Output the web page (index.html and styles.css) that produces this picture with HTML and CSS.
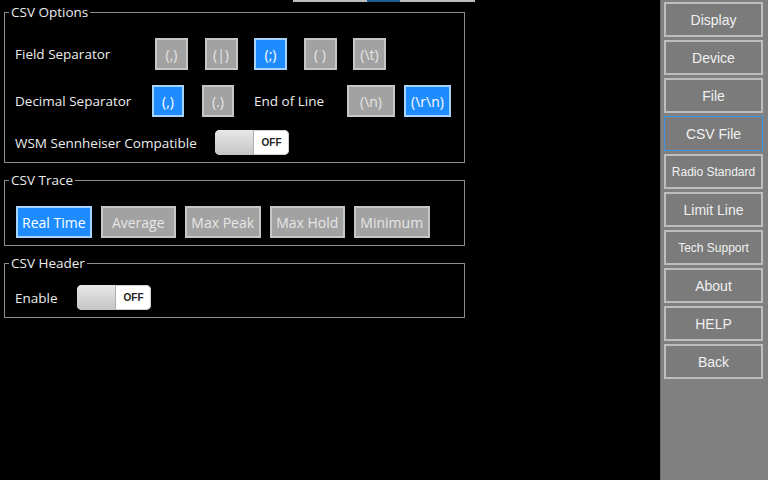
FILE: index.html
```html
<!DOCTYPE html>
<html lang="en">
<head>
    <meta charset="UTF-8">
    <meta name="viewport" content="width=device-width, initial-scale=1.0">
    <title>CSV File Settings</title>
    <link rel="stylesheet" href="styles.css">
</head>
<body>
    <div class="main">
        <div class="top-strip">
            <span class="strip-part"></span>
            <span class="strip-part active"></span>
            <span class="strip-part last"></span>
        </div>

        <fieldset class="group options">
            <legend>CSV Options</legend>
            <div class="row field-row">
                <span class="label">Field Separator</span>
                <button class="opt">(,)</button>
                <button class="opt">(|)</button>
                <button class="opt selected">(;)</button>
                <button class="opt">( )</button>
                <button class="opt">(\t)</button>
            </div>
            <div class="row decimal-row">
                <span class="label">Decimal Separator</span>
                <button class="opt selected">(,)</button>
                <button class="opt">(.)</button>
                <span class="label eol">End of Line</span>
                <button class="opt wide">(\n)</button>
                <button class="opt wide selected">(\r\n)</button>
            </div>
            <div class="row wsm-row">
                <span class="label">WSM Sennheiser Compatible</span>
                <div class="toggle"><span class="knob"></span><span class="state">OFF</span></div>
            </div>
        </fieldset>

        <fieldset class="group trace">
            <legend>CSV Trace</legend>
            <div class="row trace-row">
                <button class="opt trace-btn selected">Real Time</button>
                <button class="opt trace-btn">Average</button>
                <button class="opt trace-btn">Max Peak</button>
                <button class="opt trace-btn">Max Hold</button>
                <button class="opt trace-btn">Minimum</button>
            </div>
        </fieldset>

        <fieldset class="group header">
            <legend>CSV Header</legend>
            <div class="row enable-row">
                <span class="label">Enable</span>
                <div class="toggle"><span class="knob"></span><span class="state">OFF</span></div>
            </div>
        </fieldset>
    </div>

    <div class="sidebar">
        <button class="nav">Display</button>
        <button class="nav">Device</button>
        <button class="nav">File</button>
        <button class="nav current">CSV File</button>
        <button class="nav small">Radio Standard</button>
        <button class="nav">Limit Line</button>
        <button class="nav small">Tech Support</button>
        <button class="nav">About</button>
        <button class="nav">HELP</button>
        <button class="nav">Back</button>
    </div>
</body>
</html>
```

FILE: styles.css
```css
body {
    margin: 0;
    width: 768px;
    height: 480px;
    background: #000;
    display: flex;
    overflow: hidden;
    font-family: "Open Sans", "Noto Sans", sans-serif;
}

.main {
    width: 660px;
    padding: 0 0 0 4px;
    box-sizing: border-box;
}

/* cut-off tab bar at the very top */
.top-strip {
    display: flex;
    margin-left: 289px;
    height: 2px;
    width: 182px;
}

.strip-part {
    width: 74px;
    background: #bdbdbd;
}

.strip-part.active {
    width: 33px;
    background: #1f5c8f;
}

.strip-part.last {
    width: 75px;
}

.group {
    width: 461px;
    min-width: 0;
    box-sizing: border-box;
    margin: 1px 0 0;
    padding: 0 10px;
    border: 1px solid #8c8c8c;
    color: #ececec;
}

.group legend {
    padding: 0 2px;
    margin-left: -6px;
    font-size: 13.5px;
    line-height: 18px;
    color: #ececec;
}

.trace, .header {
    margin-top: 8px;
}

.row {
    display: flex;
    align-items: center;
}

.label {
    font-size: 13.5px;
    white-space: nowrap;
}

.opt {
    box-sizing: border-box;
    height: 32px;
    width: 33px;
    padding: 0;
    flex-shrink: 0;
    background: #a2a2a2;
    border: 2px solid #c6c6c6;
    color: #e6e6e6;
    font-family: "Open Sans", "Noto Sans", sans-serif;
    font-size: 14px;
}

.opt.selected {
    background: #1e8cff;
    border-color: #a9d3ff;
    color: #fff;
}

.field-row {
    margin-top: 17px;
    gap: 16.5px;
}

.field-row .label {
    width: 123.5px;
}

.decimal-row {
    margin-top: 15px;
}

.decimal-row .label {
    width: 137px;
}

.decimal-row .opt {
    width: 32px;
    margin-right: 18px;
}

.decimal-row .label.eol {
    width: 70px;
    margin-left: 2px;
    margin-right: 23px;
}

.decimal-row .opt.wide {
    width: 48px;
    margin-right: 9px;
}

.decimal-row .opt.wide:last-child {
    width: 47px;
    margin-right: 0;
}

.wsm-row {
    margin-top: 13px;
    margin-bottom: 7px;
}

.wsm-row .label {
    width: 200px;
}

.toggle {
    width: 74px;
    height: 25px;
    border-radius: 5px;
    display: flex;
    overflow: hidden;
    background: #fff;
    box-shadow: inset 0 0 0 1px #d0d0d0;
}

.knob {
    width: 38px;
    background: linear-gradient(#e8e8e8, #c4c4c4);
    border-right: 1px solid #b0b0b0;
}

.state {
    flex: 1;
    text-align: center;
    line-height: 25px;
    font-family: "Liberation Sans", Arial, sans-serif;
    font-size: 10px;
    font-weight: bold;
    color: #222;
}

.trace-row {
    margin-top: 17px;
    margin-bottom: 7px;
    margin-left: 1px;
    gap: 9px;
}

.opt.trace-btn {
    width: 75.5px;
}

.enable-row {
    margin-top: 13px;
    margin-bottom: 7px;
}

.enable-row .label {
    width: 62px;
}

.sidebar {
    width: 108px;
    background: #808080;
    border-left: 1px solid #6c6c6c;
    box-sizing: border-box;
    padding: 2px 5px 0 3px;
    display: flex;
    flex-direction: column;
    gap: 3px;
}

.nav {
    height: 35px;
    flex-shrink: 0;
    background: #7b7b7b;
    border: 2px solid #bdbdbd;
    color: #f0f0f0;
    font-family: "Liberation Sans", Arial, sans-serif;
    font-size: 14px;
    padding: 0;
}

.nav.small {
    font-size: 12px;
}

.nav.current {
    border: 1px solid #3d95e6;
    margin: 0;
}
```
